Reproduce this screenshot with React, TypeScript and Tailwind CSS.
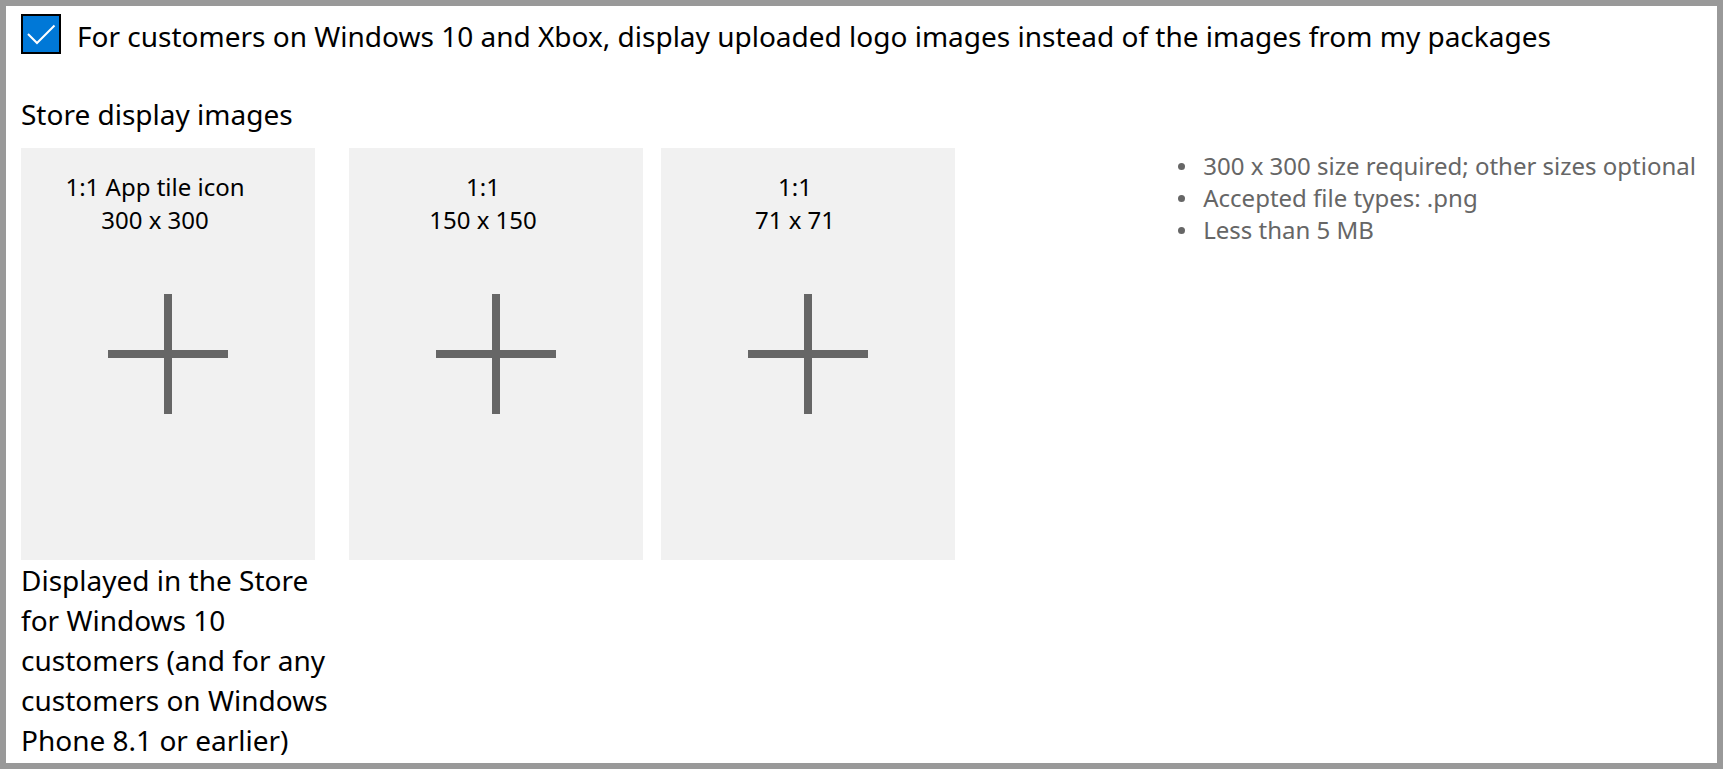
interface Tile {
  id: string;
  label: string;
  size: string;
  caption?: string;
}

const tiles: Tile[] = [
  {
    id: "tile-300",
    label: "1:1 App tile icon",
    size: "300 x 300",
    caption:
      "Displayed in the Store for Windows 10 customers (and for any customers on Windows Phone 8.1 or earlier)",
  },
  { id: "tile-150", label: "1:1", size: "150 x 150" },
  { id: "tile-71", label: "1:1", size: "71 x 71" },
];

const requirements = [
  "300 x 300 size required; other sizes optional",
  "Accepted file types: .png",
  "Less than 5 MB",
];

function UploadTile({ tile }: { tile: Tile }) {
  return (
    <div className={tile.caption ? "w-[310px] shrink-0" : "shrink-0"}>
      <button
        type="button"
        className="flex h-[412px] w-[294px] cursor-pointer flex-col items-center bg-[#f1f1f1] pt-[22px]"
      >
        <span className="w-full pr-[26px] text-center text-[24px] leading-[33px]">
          {tile.label}
          <br />
          {tile.size}
        </span>
        <svg
          className="mt-[58px] size-[120px]"
          viewBox="0 0 120 120"
          fill="#666"
          aria-hidden="true"
        >
          <path d="M56 0h8v56h56v8H64v56h-8V64H0v-8h56z" />
        </svg>
      </button>
      {tile.caption && <p className="text-[28px] leading-[40px]">{tile.caption}</p>}
    </div>
  );
}

export default function App() {
  return (
    <main className="min-h-screen border-[6px] border-[#999] bg-white pt-2 pr-[15px] pl-[15px] font-['Noto_Sans','Open_Sans',sans-serif] text-black">
      <div className="flex items-start gap-4">
        <span className="relative flex size-10 shrink-0">
          <input
            id="use-logos"
            type="checkbox"
            defaultChecked
            className="peer size-10 appearance-none border-2 border-black bg-white checked:bg-[#0078d7]"
          />
          <svg
            className="pointer-events-none absolute inset-0 hidden size-10 peer-checked:block"
            viewBox="0 0 40 40"
            fill="none"
            stroke="#fff"
            strokeWidth="2"
            aria-hidden="true"
          >
            <path d="M7 20l9 9L33.500 11.500" />
          </svg>
        </span>
        <label htmlFor="use-logos" className="pt-0.5 text-[28px] leading-[40px]">
          For customers on Windows 10 and Xbox, display uploaded logo images instead of the
          images from my packages
        </label>
      </div>
      <h2 className="mt-[38px] text-[28px] leading-[40px]">Store display images</h2>
      <section className="mt-[14px] flex items-start justify-between">
        <div className="flex gap-[18px]">
          {tiles.map((tile) => (
            <UploadTile key={tile.id} tile={tile} />
          ))}
        </div>
        <ul className="mr-1.5 pt-0.5 text-[24px] leading-[32px] text-[#666]">
          {requirements.map((item) => (
            <li
              key={item}
              className="flex items-center gap-[18px] before:size-[7px] before:shrink-0 before:rounded-full before:bg-[#666]"
            >
              {item}
            </li>
          ))}
        </ul>
      </section>
    </main>
  );
}
